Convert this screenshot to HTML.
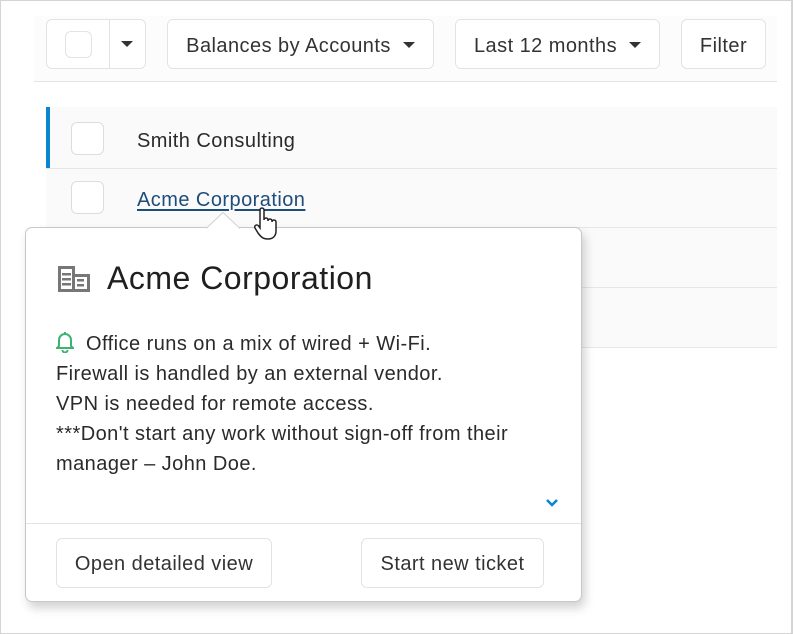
<!DOCTYPE html>
<html><head><style>
*{box-sizing:border-box;margin:0;padding:0}
body{width:793px;height:634px;overflow:hidden;background:#fff;font-family:"Liberation Sans",sans-serif;color:#222;position:relative;letter-spacing:0.45px}
.frame{position:absolute;left:0;top:0;width:793px;height:634px;border:1px solid #d4d4d4;border-right:2px solid #d4d4d4}
.tb{position:absolute;left:34px;top:16px;width:743px;height:66px;background:#fcfcfc;border-bottom:1px solid #e3e3e3}
.btn{position:absolute;border:1px solid #e3e3e3;border-radius:6px;background:#fff;font-size:20px;color:#333;display:flex;align-items:center;justify-content:center;padding-top:4px}
.caret{display:inline-block;width:0;height:0;border-left:6px solid transparent;border-right:6px solid transparent;border-top:6px solid #333;margin-left:12px;margin-top:-3px}
.cb{position:absolute;width:33px;height:33px;border:1px solid #ddd;border-radius:6px;background:#fff}
.rows{position:absolute;left:46px;top:107px;width:731px;height:240px;background:#fafafa}
.row{position:absolute;left:0;width:731px;height:60px;border-bottom:1px solid #e6e6e6}
.pop{position:absolute;left:25px;top:227px;width:557px;height:375px;background:#fff;border:1px solid #c8c8c8;border-radius:7px;box-shadow:3px 6px 10px rgba(0,0,0,0.18)}
.txt{position:absolute;left:30px;top:101px;font-size:20px;line-height:30px;color:#2a2a2a}
.pbtn{position:absolute;top:310px;height:50px;border:1px solid #e3e3e3;border-radius:6px;font-size:20px;color:#333;display:flex;align-items:center;justify-content:center;padding-top:2px}
</style></head><body>
<div class="tb"></div>
<div class="btn" style="left:46px;top:19px;width:100px;height:50px;justify-content:flex-start;padding-top:0">
 <div class="cb" style="position:relative;left:18px;top:0;width:27px;height:27px;border-color:#e3e3e3"></div>
 <div style="position:absolute;left:62px;top:0;height:48px;border-left:1px solid #e3e3e3"></div>
 <span class="caret" style="position:absolute;left:62px;margin-left:12px;margin-top:0"></span>
</div>
<div class="btn" style="left:167px;top:19px;width:267px;height:50px">Balances by Accounts<span class="caret"></span></div>
<div class="btn" style="left:455px;top:19px;width:205px;height:50px">Last 12 months<span class="caret"></span></div>
<div class="btn" style="left:681px;top:19px;width:85px;height:50px">Filter</div>

<div class="rows">
 <div class="row" style="top:0;height:62px"></div>
 <div class="row" style="top:62px;height:59px"></div>
 <div class="row" style="top:121px"></div>
 <div class="row" style="top:181px"></div>
 <div style="position:absolute;left:0;top:0;width:4px;height:61px;background:#0a85d0"></div>
 <div class="cb" style="left:25px;top:15px"></div>
 <div class="cb" style="left:25px;top:74px"></div>
 <div style="position:absolute;left:91px;top:23px;font-size:20px;color:#2a2a2a">Smith Consulting</div>
 <div style="position:absolute;left:91px;top:82px;font-size:20px;color:#1e4d7b;text-decoration:underline;text-underline-offset:3px">Acme Corporation</div>
</div>

<div class="pop">
 <svg style="position:absolute;left:180px;top:-16px" width="34" height="17"><path d="M0 16.5 L17 0.5 L34 16.5" fill="#fff" stroke="#d0d0d0"/></svg>
 <svg style="position:absolute;left:32px;top:38px" width="32" height="26" viewBox="0 0 32 26"><g fill="none" stroke="#777" stroke-width="3"><rect x="1.5" y="1.5" width="14" height="23"/><rect x="15.5" y="9.5" width="15" height="15"/></g><g fill="#777"><rect x="4" y="7" width="9" height="2.5"/><rect x="4" y="12" width="9" height="2.5"/><rect x="4" y="17" width="9" height="2.5"/><rect x="19" y="13" width="7" height="2.5"/><rect x="19" y="18" width="7" height="2.5"/></g></svg>
 <div style="position:absolute;left:81px;top:32px;font-size:32px;letter-spacing:0.5px;color:#1f1f1f">Acme Corporation</div>
 <div class="txt"><svg width="18" height="22" viewBox="0 0 18 22" style="vertical-align:-3px;margin-right:12px"><path d="M3 15 V9 a6 6 0 0 1 12 0 V15 L17 17 H1 Z M9 1 V3 M6.5 19 a2.5 2.5 0 0 0 5 0" fill="none" stroke="#3cb371" stroke-width="2"/></svg>Office runs on a mix of wired + Wi-Fi.<br>Firewall is handled by an external vendor.<br>VPN is needed for remote access.<br>***Don't start any work without sign-off from their<br>manager – John Doe.</div>
 <svg style="position:absolute;left:519px;top:270px" width="14" height="10"><path d="M2 2 L7 7 L12 2" fill="none" stroke="#0a85d0" stroke-width="2.5"/></svg>
 <div style="position:absolute;left:0;top:295px;width:555px;border-top:1px solid #e3e3e3"></div>
 <div class="pbtn" style="left:30px;width:216px">Open detailed view</div>
 <div class="pbtn" style="left:335px;width:183px">Start new ticket</div>
</div>

<svg style="position:absolute;left:253px;top:207px" width="28" height="34" viewBox="0 0 28 34"><path d="M7 3 a2 2 0 0 1 4 0 V13 a2 2 0 0 1 4 0 V14 a2 2 0 0 1 4 0 V15 a2 2 0 0 1 4 0 V24 C23 29 20 32 15 32 C10 32 8 30 5 26 L2 21 a2 2 0 0 1 3.5 -2 L7 21 Z" fill="#fff" stroke="#222" stroke-width="1.5"/></svg>
<div class="frame"></div>
</body></html>
